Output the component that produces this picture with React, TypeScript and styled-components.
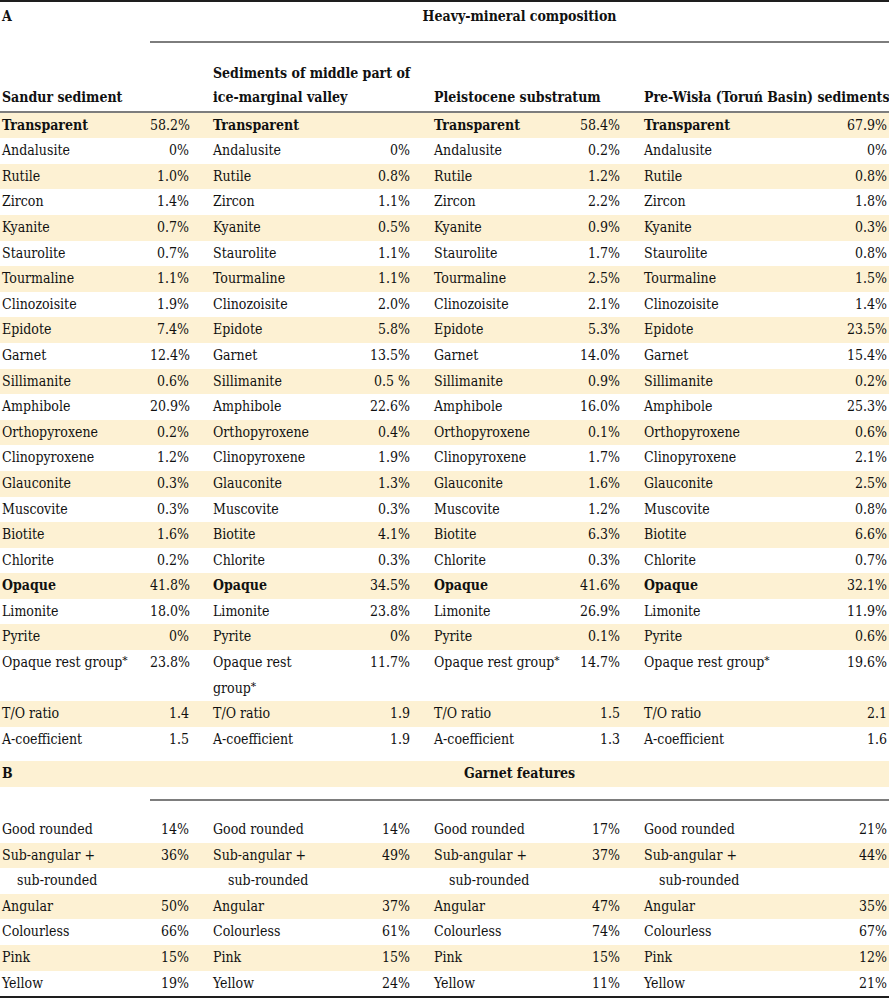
import React from "react";
import styled, { createGlobalStyle } from "styled-components";

const Global = createGlobalStyle`
  html, body { margin: 0; padding: 0; background: #ffffff; }
`;

const Table = styled.table`
  width: 889px;
  border-collapse: collapse;
  table-layout: fixed;
  border-top: 2px solid #1e1e1e;
  border-bottom: 2px solid #1e1e1e;
  font-family: "DejaVu Serif Condensed", "DejaVu Serif", serif;
  font-size: 14px;
  color: #111111;
`;

const Row = styled.tr<{ $hl?: boolean }>`
  background: ${(p) => (p.$hl ? "#fdf1d3" : "transparent")};
`;

const Spacer = styled.tr<{ $h: number }>`
  height: ${(p) => p.$h}px;
`;

const Label = styled.td<{ $first?: boolean; $bold?: boolean; $indent?: boolean }>`
  padding: 0 0 0 ${(p) => (p.$first ? 2 : 12) + (p.$indent ? 15 : 0)}px;
  line-height: 25.6px;
  vertical-align: top;
  text-align: left;
  white-space: nowrap;
  font-weight: ${(p) => (p.$bold ? 700 : 400)};
`;

const Value = styled.td<{ $last?: boolean }>`
  padding: 0 ${(p) => (p.$last ? 2 : 12)}px 0 0;
  line-height: 25.6px;
  vertical-align: top;
  text-align: right;
  white-space: nowrap;
`;

const SectionMark = styled.td<{ $top: number }>`
  padding: ${(p) => p.$top}px 0 0 2px;
  line-height: 25.6px;
  vertical-align: top;
  font-weight: 700;
`;

const SectionTitle = styled.th<{ $top: number }>`
  padding: ${(p) => p.$top}px 0 0 0;
  line-height: 25.6px;
  vertical-align: top;
  text-align: center;
  font-weight: 700;
`;

const Rule = styled.td<{ $h: number }>`
  padding: 0;
  height: ${(p) => p.$h}px;
  border-bottom: 2px solid #7d7d7d;
`;

const HeadRow = styled.tr`
  height: 70px;
  border-bottom: 2px solid #7d7d7d;
`;

const ColHead = styled.th<{ $first?: boolean }>`
  padding: 0 2px 2px ${(p) => (p.$first ? 2 : 12)}px;
  line-height: 24px;
  vertical-align: bottom;
  text-align: left;
  font-weight: 700;
  white-space: nowrap;
`;

const Star = styled.span`
  font-size: 0.85em;
  vertical-align: 0.25em;
  line-height: 0;
`;

const widths = [150, 51, 130, 91, 138, 72, 160, 97];

type Line = {
  label: string;
  values: string[];
  bold?: boolean;
  star?: boolean;
  indent?: boolean;
};

const mineralRows: Line[] = [
  { label: "Transparent", bold: true, values: ["58.2%", "", "58.4%", "67.9%"] },
  { label: "Andalusite", values: ["0%", "0%", "0.2%", "0%"] },
  { label: "Rutile", values: ["1.0%", "0.8%", "1.2%", "0.8%"] },
  { label: "Zircon", values: ["1.4%", "1.1%", "2.2%", "1.8%"] },
  { label: "Kyanite", values: ["0.7%", "0.5%", "0.9%", "0.3%"] },
  { label: "Staurolite", values: ["0.7%", "1.1%", "1.7%", "0.8%"] },
  { label: "Tourmaline", values: ["1.1%", "1.1%", "2.5%", "1.5%"] },
  { label: "Clinozoisite", values: ["1.9%", "2.0%", "2.1%", "1.4%"] },
  { label: "Epidote", values: ["7.4%", "5.8%", "5.3%", "23.5%"] },
  { label: "Garnet", values: ["12.4%", "13.5%", "14.0%", "15.4%"] },
  { label: "Sillimanite", values: ["0.6%", "0.5 %", "0.9%", "0.2%"] },
  { label: "Amphibole", values: ["20.9%", "22.6%", "16.0%", "25.3%"] },
  { label: "Orthopyroxene", values: ["0.2%", "0.4%", "0.1%", "0.6%"] },
  { label: "Clinopyroxene", values: ["1.2%", "1.9%", "1.7%", "2.1%"] },
  { label: "Glauconite", values: ["0.3%", "1.3%", "1.6%", "2.5%"] },
  { label: "Muscovite", values: ["0.3%", "0.3%", "1.2%", "0.8%"] },
  { label: "Biotite", values: ["1.6%", "4.1%", "6.3%", "6.6%"] },
  { label: "Chlorite", values: ["0.2%", "0.3%", "0.3%", "0.7%"] },
  { label: "Opaque", bold: true, values: ["41.8%", "34.5%", "41.6%", "32.1%"] },
  { label: "Limonite", values: ["18.0%", "23.8%", "26.9%", "11.9%"] },
  { label: "Pyrite", values: ["0%", "0%", "0.1%", "0.6%"] },
  { label: "Opaque rest group", star: true, values: ["23.8%", "11.7%", "14.7%", "19.6%"] },
  { label: "T/O ratio", values: ["1.4", "1.9", "1.5", "2.1"] },
  { label: "A-coefficient", values: ["1.5", "1.9", "1.3", "1.6"] },
];

const garnetRows: Line[] = [
  { label: "Good rounded", values: ["14%", "14%", "17%", "21%"] },
  { label: "Sub-angular +", values: ["36%", "49%", "37%", "44%"] },
  { label: "sub-rounded", indent: true, values: ["", "", "", ""] },
  { label: "Angular", values: ["50%", "37%", "47%", "35%"] },
  { label: "Colourless", values: ["66%", "61%", "74%", "67%"] },
  { label: "Pink", values: ["15%", "15%", "15%", "12%"] },
  { label: "Yellow", values: ["19%", "24%", "11%", "21%"] },
];

function renderLabel(line: Line, col: number) {
  if (line.star) {
    if (col === 1) {
      return (
        <>
          Opaque rest
          <br />
          group<Star>*</Star>
        </>
      );
    }
    return (
      <>
        {line.label}
        <Star>*</Star>
      </>
    );
  }
  return line.label;
}

function DataRow({ line, hl }: { line: Line; hl: boolean }) {
  return (
    <Row $hl={hl}>
      {line.values.map((v, i) => (
        <React.Fragment key={i}>
          <Label $first={i === 0} $bold={line.bold} $indent={line.indent}>
            {renderLabel(line, i)}
          </Label>
          <Value $last={i === 3}>{v}</Value>
        </React.Fragment>
      ))}
    </Row>
  );
}

export default function App() {
  return (
    <>
      <Global />
      <Table>
        <colgroup>
          {widths.map((w, i) => (
            <col key={i} style={{ width: w }} />
          ))}
        </colgroup>
        <thead>
          <Row>
            <SectionMark $top={2}>A</SectionMark>
            <SectionTitle $top={2} colSpan={7}>
              Heavy-mineral composition
            </SectionTitle>
          </Row>
          <tr>
            <td />
            <Rule $h={11} colSpan={7} />
          </tr>
          <HeadRow>
            <ColHead $first colSpan={2}>Sandur sediment</ColHead>
            <ColHead colSpan={2}>
              Sediments of middle part of
              <br />
              ice-marginal valley
            </ColHead>
            <ColHead colSpan={2}>Pleistocene substratum</ColHead>
            <ColHead colSpan={2}>Pre-Wisła (Toruń Basin) sediments</ColHead>
          </HeadRow>
        </thead>
        <tbody>
          {mineralRows.map((line, i) => (
            <DataRow key={line.label} line={line} hl={i % 2 === 0} />
          ))}
          <Spacer $h={9}>
            <td colSpan={8} />
          </Spacer>
          <Row $hl>
            <SectionMark $top={0}>B</SectionMark>
            <SectionTitle $top={0} colSpan={7}>
              Garnet features
            </SectionTitle>
          </Row>
          <tr>
            <td />
            <Rule $h={12} colSpan={7} />
          </tr>
          <Spacer $h={17}>
            <td colSpan={8} />
          </Spacer>
          {garnetRows.map((line, i) => (
            <DataRow key={line.label} line={line} hl={i % 2 === 1} />
          ))}
        </tbody>
      </Table>
    </>
  );
}
